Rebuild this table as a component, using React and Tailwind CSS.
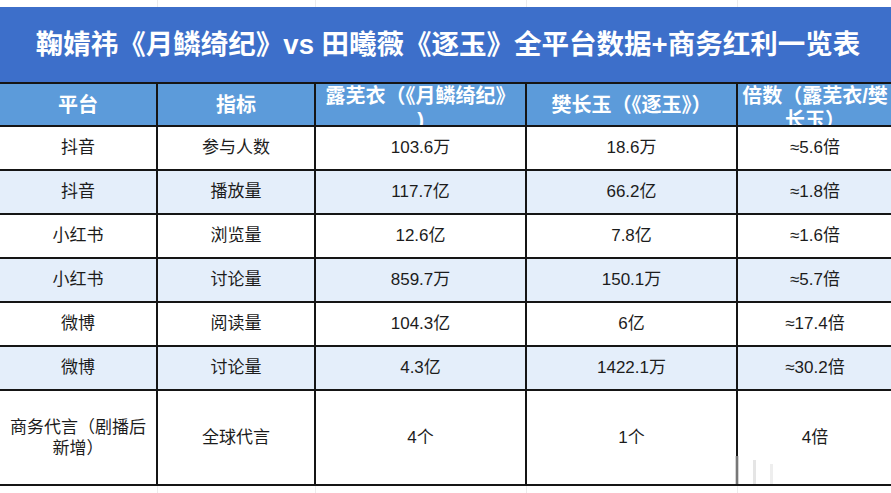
import React from "react";

const cols = "grid grid-cols-[158px_158px_211px_211px_154px]";

const rows = [
  { platform: "抖音", metric: "参与人数", a: "103.6万", b: "18.6万", ratio: "≈5.6倍" },
  { platform: "抖音", metric: "播放量", a: "117.7亿", b: "66.2亿", ratio: "≈1.8倍" },
  { platform: "小红书", metric: "浏览量", a: "12.6亿", b: "7.8亿", ratio: "≈1.6倍" },
  { platform: "小红书", metric: "讨论量", a: "859.7万", b: "150.1万", ratio: "≈5.7倍" },
  { platform: "微博", metric: "阅读量", a: "104.3亿", b: "6亿", ratio: "≈17.4倍" },
  { platform: "微博", metric: "讨论量", a: "4.3亿", b: "1422.1万", ratio: "≈30.2倍" },
];

function GhostStrip({ h }) {
  // faint spreadsheet gridlines peeking out above/below the table
  return (
    <div className={`${cols} ${h}`}>
      <div className="border-r border-[#ececec]" />
      <div className="border-r border-[#ececec]" />
      <div className="border-r border-[#ececec]" />
      <div className="border-r border-[#ececec]" />
      <div />
    </div>
  );
}

function Cell({ children, last, className = "" }) {
  return (
    <div
      className={`flex items-center justify-center text-center border-b-2 border-[#151515] ${
        last ? "" : "border-r-2"
      } ${className}`}
    >
      {children}
    </div>
  );
}

export default function App() {
  return (
    <div
      className="relative w-[891px] h-[493px] overflow-hidden bg-white"
      style={{ fontFamily: '"Liberation Sans", "Noto Sans CJK SC", sans-serif' }}
    >
      <div className="w-[892px]">
        <GhostStrip h="h-[7px]" />

        {/* title */}
        <div className="h-[75px] bg-[#3d6fca] flex items-center justify-center pl-[4px]">
          <h1 className="text-white font-bold text-[27.5px] whitespace-nowrap">
            鞠婧祎《月鳞绮纪》vs 田曦薇《逐玉》全平台数据+商务红利一览表
          </h1>
        </div>

        {/* header */}
        <div className={`${cols} h-[45px] bg-[#5c9bda] border-t-2 border-[#151515] text-white font-bold text-[20px] leading-[24px]`}>
          <Cell className="overflow-hidden">平台</Cell>
          <Cell className="overflow-hidden">指标</Cell>
          <Cell className="overflow-hidden items-start">
            <span className="whitespace-nowrap">
              露芜衣（《月鳞绮纪》
              <br />)
            </span>
          </Cell>
          <Cell className="overflow-hidden">樊长玉（《逐玉》）</Cell>
          <Cell last className="overflow-hidden items-start">
            <span className="whitespace-nowrap">
              倍数（露芜衣/樊
              <br />
              长玉）
            </span>
          </Cell>
        </div>

        {/* data rows */}
        <div className="text-[17px] text-[#1c1c1c]">
          {rows.map((r, i) => (
            <div
              key={i}
              className={`${cols} h-[44px] ${i % 2 === 1 ? "bg-[#e4eefa]" : "bg-white"}`}
            >
              <Cell>{r.platform}</Cell>
              <Cell>{r.metric}</Cell>
              <Cell>{r.a}</Cell>
              <Cell>{r.b}</Cell>
              <Cell last>{r.ratio}</Cell>
            </div>
          ))}

          <div className={`${cols} h-[95px] bg-white leading-[21px]`}>
            <Cell>
              <span>
                商务代言（剧播后
                <br />
                新增）
              </span>
            </Cell>
            <Cell>全球代言</Cell>
            <Cell>4个</Cell>
            <Cell>1个</Cell>
            <Cell last>4倍</Cell>
          </div>
        </div>

        <GhostStrip h="h-[7px]" />
      </div>

      {/* faint watermark bars, bottom right */}
      <div className="absolute left-[735px] top-[456px] flex gap-[14px] items-end opacity-60">
        <div className="w-[4px] h-[28px] bg-[#b8b8b8]" />
        <div className="w-[3px] h-[24px] bg-[#d4d4d4]" />
        <div className="w-[3px] h-[20px] bg-[#e2e2e2]" />
      </div>
    </div>
  );
}
